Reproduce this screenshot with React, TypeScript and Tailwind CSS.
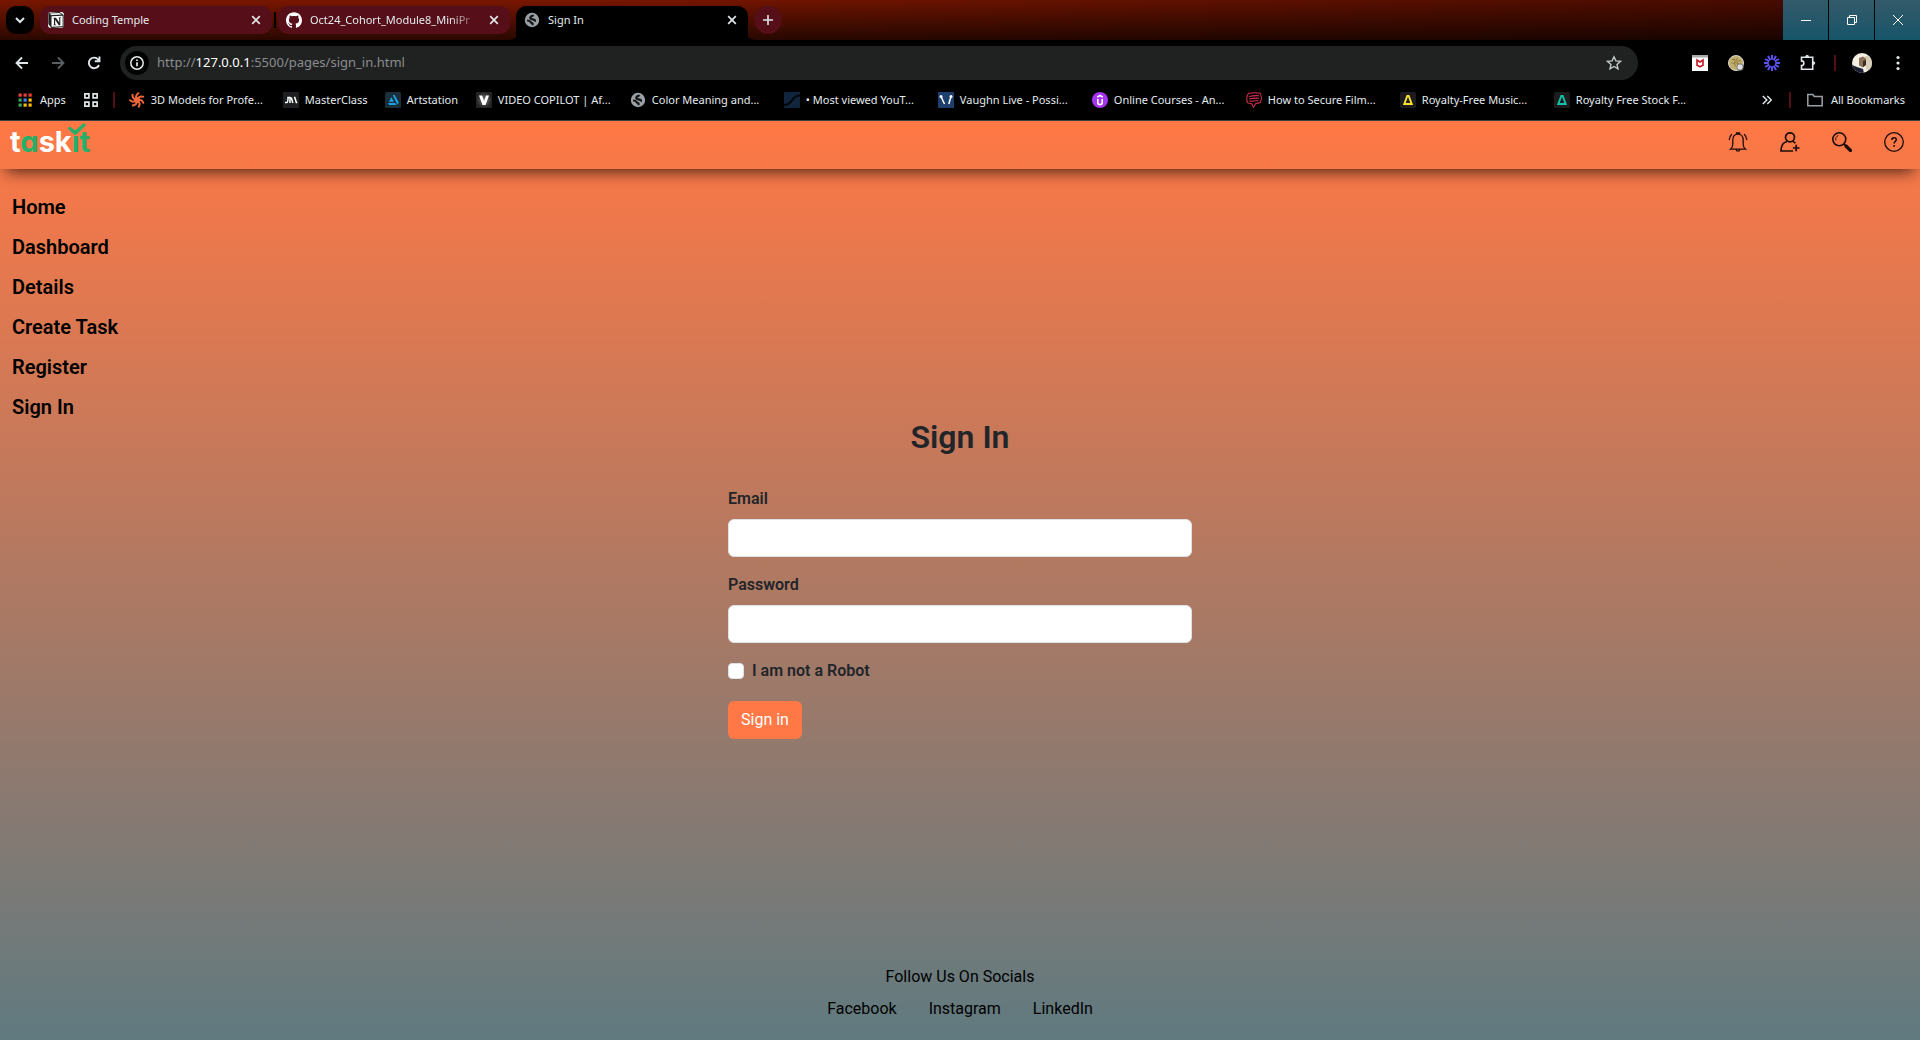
import React from 'react';
import { SiGithub, SiNotion } from 'react-icons/si';

function Close() {
  return (
    <svg className="size-2.5" viewBox="0 0 10 10" stroke="#dfe6e8" strokeWidth="1.7" fill="none">
      <path d="M1.2 1.2l7.6 7.6M8.8 1.2L1.2 8.8" />
    </svg>
  );
}

function Globe() {
  return (
    <svg className="size-4" viewBox="0 0 16 16">
      <circle cx="8" cy="8" r="7.2" fill="#9aa0a6" />
      <path d="M9.500 3C8.500 4.500 6.500 3.800 6.300 5.500c-.1 1.500 1.300 1.700 2.500 1.800 1.800.2 1.700 1.500 3.200 1.600M3 8.500c1.500-.1 2.700.2 3.300 1.200.6 1 1.200 1.500 2.200 1.700v1.800" fill="none" stroke="#151616" strokeWidth="2.200" strokeLinejoin="round" />
    </svg>
  );
}

function Spiral() {
  const arms = [0, 51, 103, 154, 206, 257, 309];
  return (
    <svg className="size-4" viewBox="0 0 16 16" fill="none" stroke="#f0693c" strokeWidth="2" strokeLinecap="round">
      <circle cx="8" cy="8" r="2" fill="#f0693c" />
      {arms.map((a) => (
        <path key={a} d="M8 7C6.500 5 6.800 3 9.300 1.200" transform={`rotate(${a} 8 8)`} />
      ))}
    </svg>
  );
}

function MasterClass() {
  return (
    <svg className="size-4" viewBox="0 0 16 16">
      <path fill="#1d1f20" d="M0 0h16v16H0z" />
      <path d="M2 10.500h1.800c1 0 1.200-.8 1.200-5h2v5.500M8.300 5.500l1.500 5.500M11 5.500h.8l1.500 5h1" fill="none" stroke="#fff" strokeWidth="1.500" />
    </svg>
  );
}

function Artstation() {
  return (
    <svg className="size-4" viewBox="0 0 16 16">
      <rect width="16" height="16" rx="1.500" fill="#1b2f3b" />
      <path d="M3 11h7.200l1.200 2H4.200zM6.300 5.300L4 9.800h5zM7.700 3h2l4 7.500-1.300 2.200z" fill="#1aa3e8" />
    </svg>
  );
}

function VideoCopilot() {
  return (
    <svg className="size-4" viewBox="0 0 16 16">
      <defs>
        <radialGradient id="vc"><stop offset="0" stopColor="#777" /><stop offset="1" stopColor="#222" /></radialGradient>
      </defs>
      <path fill="url(#vc)" d="M0 0h16v16H0z" />
      <path d="M3 3.500h3.200L8.100 9l1.900-5.500h3L9.600 13H6.500z" fill="#fff" />
    </svg>
  );
}

function Wave() {
  return (
    <svg className="size-4" viewBox="0 0 16 16">
      <path fill="#10243c" d="M0 0h16v16H0z" />
      <path d="M0 13C10 13 6 3.500 16 3.500" fill="none" stroke="#02060b" strokeWidth="2" />
    </svg>
  );
}

function Vaughn() {
  return (
    <svg className="size-4" viewBox="0 0 16 16">
      <path fill="#1c3f6e" d="M0 0h16v16H0z" />
      <path d="M3 4.500L6.500 12M13 4.500L10.800 12" fill="none" stroke="#fff" strokeWidth="1.500" />
      <circle cx="3" cy="4.500" r="1.500" fill="#fff" />
      <circle cx="13" cy="4.500" r="1.500" fill="#fff" />
    </svg>
  );
}

function Udemy() {
  return (
    <svg className="size-4" viewBox="0 0 16 16" fill="none" stroke="#fff">
      <circle cx="8" cy="8" r="8" fill="#a435f0" stroke="none" />
      <path d="M5.800 7v3.400a2.200 2.200 0 0 0 4.400 0V7" strokeWidth="1.600" />
      <path d="M5.200 5.200L8 3.500l2.800 1.700" strokeWidth="1.500" />
    </svg>
  );
}

function Speech() {
  return (
    <svg className="size-4" viewBox="0 0 16 16" fill="none" stroke="#cf2f4d" strokeWidth="1.100">
      <path d="M2.500 1.200C7 .6 11 .5 14 1.300c1.500 2.500 1.500 6.500.3 9.200-1.300.6-3 .9-4.500 1l-2.300 3.700-1.700-3.400c-1.500 0-3-.4-4.200-1.200C.4 7.500.5 4 2.500 1.200zM3 4.500c3.500-.9 6.500-1 10-.8M3 7c3.500-.8 6.500-1 10-.8M3.500 9.400c3-.6 6-.8 9-.6" />
    </svg>
  );
}

function Triangle({ color }: { color: string }) {
  return (
    <svg className="size-4" viewBox="0 0 16 16">
      <rect width="16" height="16" rx="1.500" fill="#1c1c1e" />
      <path d="M7.300 4h1.400l3 8H4.300z" fill="none" stroke={color} strokeWidth="1.900" />
    </svg>
  );
}

const bookmarks = [
  { label: '3D Models for Profe...', icon: <Spiral />, width: 'w-[154px]' },
  { label: 'MasterClass', icon: <MasterClass />, width: 'w-[102px]' },
  { label: 'Artstation', icon: <Artstation />, width: 'w-[91px]' },
  { label: 'VIDEO COPILOT | Af...', icon: <VideoCopilot />, width: 'w-[154px]' },
  { label: 'Color Meaning and...', icon: <Globe />, width: 'w-[154px]' },
  { label: '• Most viewed YouT...', icon: <Wave />, width: 'w-[154px]' },
  { label: 'Vaughn Live - Possi...', icon: <Vaughn />, width: 'w-[154px]' },
  { label: 'Online Courses - An...', icon: <Udemy />, width: 'w-[154px]' },
  { label: 'How to Secure Film...', icon: <Speech />, width: 'w-[154px]' },
  { label: 'Royalty-Free Music...', icon: <Triangle color="#fbe22f" />, width: 'w-[154px]' },
  { label: 'Royalty Free Stock F...', icon: <Triangle color="#12c2a9" />, width: 'w-[154px]' },
];

function Tab({ title, icon, fade }: { title: string; icon: React.ReactNode; fade?: boolean }) {
  return (
    <div role="tab" aria-selected="false" className="mb-1.5 flex h-7 w-[232px] items-center rounded-[10px] bg-[#560f18] pr-[11px] pl-2">
      {icon}
      <span className={fade ? 'ml-2 whitespace-nowrap [mask-image:linear-gradient(to_right,black_140px,transparent_172px)]' : 'ml-2 whitespace-nowrap'}>{title}</span>
      <button aria-label={`Close ${title}`} className="ml-auto"><Close /></button>
    </div>
  );
}

function TabStrip() {
  return (
    <div className="flex h-10 items-end bg-[linear-gradient(to_bottom,transparent,#000000a8),linear-gradient(to_right,#781600,#781600_30%,#420a00)] pl-1.5">
      <button aria-label="Search tabs" className="mb-1.5 flex size-7 items-center justify-center rounded-[10px] bg-black">
        <svg className="size-2.5" viewBox="0 0 10 10" fill="none" stroke="#dfe6e8" strokeWidth="2"><path d="M1 3l4 4 4-4" /></svg>
      </button>
      <div role="tablist" className="ml-1.5 flex items-end">
        <Tab title="Coding Temple" icon={<span className="rounded-[3px] bg-white"><SiNotion className="size-4 text-[#222]" /></span>} />
        <span className="mx-0.5 mb-3 h-4 w-0.5 bg-black" />
        <Tab title="Oct24_Cohort_Module8_MiniPr" fade icon={<SiGithub className="size-4 shrink-0 text-white" />} />
        <div className="h-2.5 w-1.5 bg-[radial-gradient(circle_at_0_0,transparent_9px,#000_10px)]" />
        <div role="tab" aria-selected="true" className="flex h-[34px] w-[232px] items-center rounded-t-[10px] bg-black pr-[11px] pb-1.5 pl-2">
          <Globe />
          <span className="ml-2">Sign In</span>
          <button aria-label="Close Sign In" className="ml-auto"><Close /></button>
        </div>
        <div className="h-2.5 w-1.5 bg-[radial-gradient(circle_at_100%_0,transparent_9px,#000_10px)]" />
      </div>
      <button aria-label="New tab" className="mb-1.5 flex size-7 items-center justify-center rounded-full bg-[#560f18]">
        <svg className="size-2.5" viewBox="0 0 10 10" stroke="#dfe6e8" strokeWidth="1.600"><path d="M5 0v10M0 5h10" /></svg>
      </button>
      <div className="ml-auto flex h-10 gap-px bg-black">
        <button aria-label="Minimize" className="flex w-[45px] items-center justify-center bg-linear-to-b from-[#325a69] to-[#15556a]">
          <svg className="size-2.5" viewBox="0 0 10 10" stroke="#fff"><path d="M0 5.500h10" /></svg>
        </button>
        <button aria-label="Restore" className="flex w-[45px] items-center justify-center bg-linear-to-b from-[#325a69] to-[#15556a]">
          <svg className="size-2.5" viewBox="0 0 10 10" fill="none" stroke="#fff"><path d="M.5 2.500h7v7h-7zM2.500 2.500v-2h7v7h-2" /></svg>
        </button>
        <button aria-label="Close window" className="flex w-[45px] items-center justify-center bg-linear-to-b from-[#325a69] to-[#15556a]">
          <svg className="size-2.5" viewBox="0 0 10 10" stroke="#fff"><path d="M0 0l10 10M10 0L0 10" /></svg>
        </button>
      </div>
    </div>
  );
}

function Toolbar() {
  const rays = [0, 30, 60, 90, 120, 150, 180, 210, 240, 270, 300, 330];
  return (
    <div className="flex h-[46px] items-center px-3.5">
      <button aria-label="Back">
        <svg className="size-4" viewBox="0 0 16 16" fill="none" stroke="#dfe6e8" strokeWidth="1.800"><path d="M14 8H3M8 2.500L2.500 8 8 13.500" /></svg>
      </button>
      <button aria-label="Forward" className="ml-5">
        <svg className="size-4" viewBox="0 0 16 16" fill="none" stroke="#5b5f61" strokeWidth="1.800"><path d="M2 8h11M8 2.500L13.500 8 8 13.500" /></svg>
      </button>
      <button aria-label="Reload" className="ml-5">
        <svg className="size-4" viewBox="0 0 16 16" fill="none" stroke="#dfe6e8" strokeWidth="1.900"><path d="M13 10a5.300 5.300 0 1 1-.8-5.500L13 5.500M13.500 1.500v4.700H8.800" /></svg>
      </button>
      <div className="ml-[18px] flex h-[34px] flex-1 items-center rounded-full bg-[#202222] pr-4 pl-[5px]">
        <button aria-label="Site information" className="flex size-6 items-center justify-center rounded-full bg-black">
          <svg className="size-3.5" viewBox="0 0 14 14" fill="none" stroke="#e6ebec" strokeWidth="1.500"><circle cx="7" cy="7" r="6.200" /><path d="M7 6.300v4M7 3.500v1.500" strokeWidth="1.700" /></svg>
        </button>
        <div className="ml-2 text-[13px] text-[#8a8d8e]">http://<span className="text-white">127.0.0.1</span>:5500/pages/sign_in.html</div>
        <button aria-label="Bookmark this tab" className="ml-auto">
          <svg className="size-4" viewBox="0 0 16 16" fill="none" stroke="#c4c9ca" strokeWidth="1.400"><path d="M8 1.800l1.900 4.100 4.500.5-3.400 3 1 4.400L8 11.500l-4 2.300 1-4.400-3.400-3 4.500-.5z" /></svg>
        </button>
      </div>
      <div className="ml-[54px] flex items-center gap-5">
        <svg className="size-4" viewBox="0 0 16 16"><path fill="#fff" d="M0 0h16v16H0z" /><path fill="#aaa" d="M0 0h16v2.500H0z" /><path d="M5 5v5.200l3 1.600 3-1.600V5L8 7z" fill="none" stroke="#c8202f" strokeWidth="1.700" /></svg>
        <svg className="size-4" viewBox="0 0 16 16" fill="none"><circle cx="8" cy="8" r="7.500" fill="#c3ae6b" stroke="#d8d8d8" /><path d="M4 4.500h3v7M7 8H3.500M9 3v6h3M10 6h3" stroke="#8a7840" /><circle cx="12" cy="12" r="3.200" fill="#ddd" stroke="#777" /></svg>
        <svg className="size-4" viewBox="0 0 16 16" stroke="#5b52f0" strokeWidth="2">{rays.map((r) => <path key={r} d="M8 0v4.800" transform={`rotate(${r} 8 8)`} />)}</svg>
        <svg className="size-4" viewBox="0 0 16 16" fill="none" stroke="#dfe6e8" strokeWidth="1.600"><path d="M1.500 2.300h11.200v11.900H1.500v-3.600a2.300 2.300 0 0 0 0-4.700z" /><path d="M5.700 1.600a1.400 1.400 0 0 1 2.800 0zM13.300 6.700a1.400 1.400 0 0 1 0 2.800z" fill="#dfe6e8" strokeWidth="1" /></svg>
      </div>
      <span className="ml-[18px] h-4 w-0.5 bg-[#560f18]" />
      <svg className="ml-4 size-5" viewBox="0 0 20 20">
        <defs><clipPath id="avatar"><circle cx="10" cy="10" r="10" /></clipPath></defs>
        <g clipPath="url(#avatar)">
          <path fill="#f3efe4" d="M0 0h20v20H0z" />
          <path fill="#d9cfb8" d="M13 3h7v14h-6z" />
          <path fill="#1b1d33" d="M0 12l5 2 6 2 1 4H0z" />
          <path fill="#8a7058" d="M7 5l4-1.500 3 2v6l-3 3-4-2z" />
          <path fill="#3a2c26" d="M11 8l3-1v5l-3 2z" />
        </g>
      </svg>
      <button aria-label="Menu" className="ml-[18px]">
        <svg className="size-4" viewBox="0 0 16 16" fill="#dfe6e8"><circle cx="8" cy="2.500" r="1.600" /><circle cx="8" cy="8" r="1.600" /><circle cx="8" cy="13.500" r="1.600" /></svg>
      </button>
    </div>
  );
}

function BookmarksBar() {
  const dots = ['#ea4335', '#ea4335', '#ea4335', '#34a853', '#4285f4', '#fbbc04', '#34a853', '#fbbc04', '#fbbc04'];
  return (
    <nav aria-label="Bookmarks" className="flex h-7 items-center pr-[15px] pl-[18px]">
      <a href="#apps" className="flex items-center gap-2">
        <svg className="size-3.5" viewBox="0 0 14 14">{dots.map((c, i) => <rect key={i} x={(i % 3) * 5 + 0.5} y={Math.floor(i / 3) * 5 + 0.5} width="3.200" height="3.200" fill={c} />)}</svg>
        Apps
      </a>
      <button aria-label="Tab groups" className="ml-[18px]">
        <svg className="size-3.5" viewBox="0 0 14 14" fill="none" stroke="#dfe6e8" strokeWidth="1.700"><path d="M.9.900h4v4h-4zM9.100.900h4v4h-4zM.9 9.100h4v4h-4zM9.100 9.100h4v4h-4z" /></svg>
      </button>
      <span className="ml-[15px] h-4 w-0.5 bg-[#560f18]" />
      <div className="ml-3.5 flex">
        {bookmarks.map((b) => (
          <a key={b.label} href="#bookmark" className={`flex shrink-0 items-center gap-1.5 whitespace-nowrap ${b.width}`}>
            <span className="shrink-0">{b.icon}</span>
            {b.label}
          </a>
        ))}
      </div>
      <button aria-label="More bookmarks" className="ml-auto">
        <svg className="size-2.5" viewBox="0 0 10 10" fill="none" stroke="#dfe6e8" strokeWidth="1.500"><path d="M.8 1l4 4-4 4M5.300 1l4 4-4 4" /></svg>
      </button>
      <span className="ml-[17px] h-4 w-0.5 bg-[#560f18]" />
      <a href="#all" className="ml-4 flex items-center gap-2 whitespace-nowrap">
        <svg className="h-3.5 w-4" viewBox="0 0 16 14" fill="none" stroke="#9ba1a4" strokeWidth="1.500"><path d="M.8 1.500h5l1.500 2h7.900v9.200H.8z" /></svg>
        All Bookmarks
      </a>
    </nav>
  );
}

function Logo() {
  return (
    <a href="#home" aria-label="taskit" className="relative mt-[3px] ml-2.5 font-['Inter',sans-serif] text-[29px] leading-9 font-bold text-white [font-feature-settings:'cv11']">
      t<span className="text-[#27ae67]">a</span>sk<span className="text-[#27ae67]">it</span>
      <svg className="absolute -top-px left-[58px] h-3 w-[18px]" viewBox="0 0 18 12" fill="none" stroke="#27ae67" strokeWidth="3.500" strokeLinecap="round" strokeLinejoin="round">
        <path d="M2 5.500l5 4.500L16 2" />
      </svg>
    </a>
  );
}

function HeaderIcons() {
  return (
    <div className="ml-auto flex gap-8 pt-[11px] pr-4 text-[#1c0d08]">
      <button aria-label="Notifications">
        <svg className="size-5" viewBox="0 0 20 20" fill="none" stroke="currentColor" strokeWidth="1.300" strokeLinecap="round">
          <path d="M2.500 17.200h15c-1.700-1.300-2.300-2.500-2.300-5V8c0-3.300-1.800-5.900-5.200-5.900S4.800 4.700 4.800 8v4.200c0 2.500-.6 3.700-2.300 5zM8.500 2V.9h3V2M8.200 17.500c.2 2.200 3.400 2.200 3.600 0M3.500 2.500C2.200 3.800 1.500 5.300 1.300 7.500M16.500 2.500c1.300 1.300 2 2.800 2.200 5" />
        </svg>
      </button>
      <button aria-label="Add user">
        <svg className="size-5" viewBox="0 0 20 20" fill="none" stroke="currentColor" strokeWidth="1.700">
          <circle cx="10" cy="5.300" r="4.500" />
          <path d="M13 19H1c0-4.500 2-8.500 6-9.500M13 9.500c1 .4 1.700 1 2.300 1.800M16.200 12.700v6.600M12.900 16h6.600" />
        </svg>
      </button>
      <button aria-label="Search">
        <svg className="size-5" viewBox="0 0 20 20" fill="none" stroke="currentColor">
          <circle cx="7.300" cy="7.300" r="6.500" strokeWidth="1.600" />
          <path d="M4 8.500a3.800 3.800 0 0 1 2.300-5" strokeWidth=".9" />
          <path d="M12 12l1.800 1.800" strokeWidth="1.700" />
          <path d="M14 14l4.500 4.500" strokeWidth="3.200" strokeLinecap="round" />
        </svg>
      </button>
      <button aria-label="Help">
        <svg className="size-5" viewBox="0 0 20 20" fill="none" stroke="currentColor">
          <circle cx="10" cy="10" r="9.300" strokeWidth="1.300" />
          <path d="M7.800 8c0-3 4.500-3 4.500-.4 0 1.700-2.200 1.900-2.200 4M10.100 13v1.800" strokeWidth="1.600" />
        </svg>
      </button>
    </div>
  );
}

const field = 'mb-4 block h-[38px] w-full rounded-md border border-[#dee2e6] bg-white px-3 text-[#212529]';

export default function App() {
  return (
    <div className="flex min-h-screen flex-col">
      <div className="bg-black font-['Noto_Sans',sans-serif] text-[11px] text-[#e3ebee]">
        <TabStrip />
        <Toolbar />
        <BookmarksBar />
        <div className="mt-1.5 h-px bg-[#3c4144]" />
      </div>
      <div className="flex flex-1 flex-col bg-linear-to-b/srgb from-[#ff7845] to-[#607a80] font-['Roboto',sans-serif] text-base text-[#212529]">
        <header className="flex h-12 items-start shadow-[0_8px_16px_-6px_#000000c0]">
          <Logo />
          <HeaderIcons />
        </header>
        <div className="grid flex-1 grid-cols-[1fr_464px_1fr]">
          <nav aria-label="Pages" className="flex flex-col items-start px-3 pt-[18px] text-xl leading-10 font-semibold text-black">
            {['Home', 'Dashboard', 'Details', 'Create Task', 'Register', 'Sign In'].map((l) => (
              <a key={l} href="#page">{l}</a>
            ))}
          </nav>
          <main className="pt-[249px]">
            <h1 className="mb-[31px] text-center text-[32px] leading-[38px] font-semibold">Sign In</h1>
            <form onSubmit={(e) => e.preventDefault()}>
              <label htmlFor="email" className="mb-2 block leading-6 font-semibold">Email</label>
              <input id="email" type="email" className={field} />
              <label htmlFor="password" className="mb-2 block leading-6 font-semibold">Password</label>
              <input id="password" type="password" className={field} />
              <div className="mb-[18px] flex items-center gap-2">
                <input id="robot" type="checkbox" className="size-4 appearance-none rounded border border-[#dee2e6] bg-white checked:bg-[#ff7845]" />
                <label htmlFor="robot" className="leading-6 font-semibold">I am not a Robot</label>
              </div>
              <button type="submit" className="h-[38px] rounded-md bg-[#ff7845] px-[13px] text-white">Sign in</button>
            </form>
          </main>
        </div>
        <footer className="flex flex-col items-center gap-2 pb-[19px] text-black">
          <p>Follow Us On Socials</p>
          <div className="flex gap-8">
            <a href="#facebook">Facebook</a>
            <a href="#instagram">Instagram</a>
            <a href="#linkedin">LinkedIn</a>
          </div>
        </footer>
      </div>
    </div>
  );
}
